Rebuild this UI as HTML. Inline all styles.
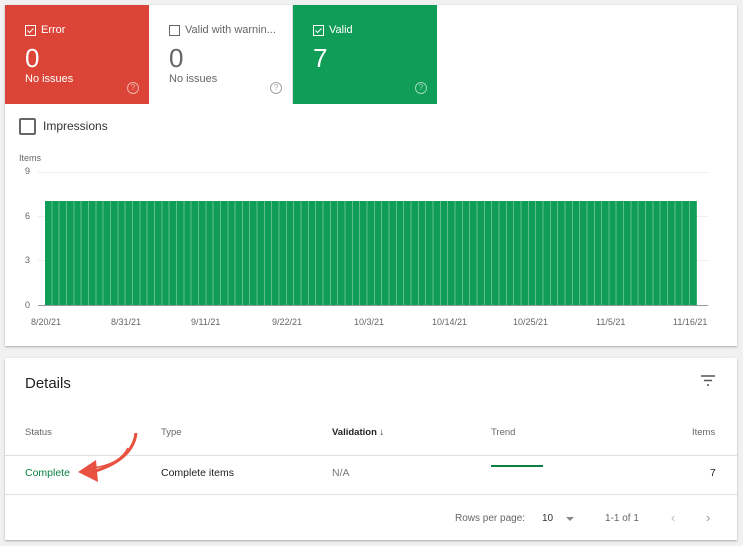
<!DOCTYPE html>
<html><head><style>
body{margin:0;background:#f1f1f1;width:743px;height:546px;position:relative;font-family:"Liberation Sans",Arial,sans-serif;overflow:hidden}
.card{position:absolute;left:5px;width:732px;background:#fff;box-shadow:0 1px 2px rgba(0,0,0,.3)}
.tile{position:absolute;top:0;width:144px;height:99px;}
.tile .lbl{position:absolute;left:20px;top:19px;font-size:11px;display:flex;align-items:center}
.cb{width:9px;height:9px;border:1px solid currentColor;margin-right:5px;position:relative}
.tile .num{position:absolute;left:20px;top:38px;font-size:26px}
.tile .sub{position:absolute;left:20px;top:68px;font-size:11px}
.q{position:absolute;right:10px;top:77px;width:10px;height:10px;border:1px solid currentColor;border-radius:50%;font-size:8px;text-align:center;line-height:10px;opacity:.6}
.ax{position:absolute;font-size:9px;color:#666}
.grid{position:absolute;left:38px;width:670px;height:1px;background:#eee}
.th{position:absolute;top:427px;font-size:9.5px;color:#666}
</style></head><body>
<div class="card" style="top:5px;height:341px">
 <div class="tile" style="left:0;background:#db4437;color:#fff"><div class="lbl"><div class="cb"><svg width="9" height="9" style="position:absolute;left:0;top:0"><path d="M1.5 4.5l2 2 4-4" stroke="#fff" fill="none" stroke-width="1"/></svg></div>Error</div><div class="num">0</div><div class="sub">No issues</div><div class="q">?</div></div>
 <div class="tile" style="left:144px;background:#fff;color:#666;border-right:1px solid #ddd;width:143px"><div class="lbl"><div class="cb"></div>Valid with warnin...</div><div class="num">0</div><div class="sub">No issues</div><div class="q">?</div></div>
 <div class="tile" style="left:288px;background:#0f9d58;color:#fff"><div class="lbl"><div class="cb"><svg width="9" height="9" style="position:absolute;left:0;top:0"><path d="M1.5 4.5l2 2 4-4" stroke="#fff" fill="none" stroke-width="1"/></svg></div>Valid</div><div class="num">7</div><div class="q">?</div></div>
 <div style="position:absolute;left:14px;top:113px;width:13px;height:13px;border:2px solid #666;border-radius:2px"></div>
 <div style="position:absolute;left:38px;top:114px;font-size:12px;color:#333">Impressions</div>
</div>
<div class="ax" style="left:19px;top:153px">Items</div>
<div class="ax" style="left:25px;top:166px">9</div>
<div class="ax" style="left:25px;top:211px">6</div>
<div class="ax" style="left:25px;top:255px">3</div>
<div class="ax" style="left:25px;top:300px">0</div>
<div class="grid" style="top:172px"></div>
<div class="grid" style="top:216px"></div>
<div class="grid" style="top:260px"></div>
<div style="position:absolute;left:45px;top:201px;width:652px;height:104px;background:repeating-linear-gradient(90deg,#0f9d58 0,#0f9d58 6.33px,#5fbf8c 6.33px,#5fbf8c 7.33px)"></div>
<div style="position:absolute;left:38px;top:305px;width:670px;height:1px;background:#999"></div>
<div class="ax" style="left:31px;top:317px">8/20/21</div>
<div class="ax" style="left:111px;top:317px">8/31/21</div>
<div class="ax" style="left:191px;top:317px">9/11/21</div>
<div class="ax" style="left:272px;top:317px">9/22/21</div>
<div class="ax" style="left:354px;top:317px">10/3/21</div>
<div class="ax" style="left:432px;top:317px">10/14/21</div>
<div class="ax" style="left:513px;top:317px">10/25/21</div>
<div class="ax" style="left:596px;top:317px">11/5/21</div>
<div class="ax" style="left:673px;top:317px">11/16/21</div>

<div class="card" style="top:358px;height:182px"></div>
<div style="position:absolute;left:25px;top:375px;font-size:15px;color:#222">Details</div>
<svg style="position:absolute;left:700px;top:375px" width="16" height="12"><path d="M1 1h14M4 5.5h8M7 10h2" stroke="#555" stroke-width="1.5"/></svg>
<div class="th" style="left:25px">Status</div>
<div class="th" style="left:161px">Type</div>
<div class="th" style="left:332px;color:#222;font-weight:bold">Validation <span style="font-weight:normal">&#8595;</span></div>
<div class="th" style="left:491px">Trend</div>
<div class="th" style="left:692px">Items</div>
<div style="position:absolute;left:5px;top:455px;width:732px;height:1px;background:#e0e0e0"></div>
<div style="position:absolute;left:25px;top:467px;font-size:10.5px;color:#0b8043">Complete</div>
<div style="position:absolute;left:161px;top:467px;font-size:10.5px;color:#222">Complete items</div>
<div style="position:absolute;left:332px;top:467px;font-size:10.5px;color:#777">N/A</div>
<div style="position:absolute;left:491px;top:465px;width:52px;height:2px;background:#0b8043"></div>
<div style="position:absolute;left:710px;top:467px;font-size:10.5px;color:#222">7</div>
<div style="position:absolute;left:5px;top:494px;width:732px;height:1px;background:#e0e0e0"></div>
<div style="position:absolute;left:455px;top:513px;font-size:10px;color:#666">Rows per page:</div>
<div style="position:absolute;left:542px;top:513px;font-size:10px;color:#333">10</div>
<div style="position:absolute;left:566px;top:517px;width:0;height:0;border-left:4px solid transparent;border-right:4px solid transparent;border-top:4px solid #888"></div>
<div style="position:absolute;left:605px;top:513px;font-size:10px;color:#666">1-1 of 1</div>
<div style="position:absolute;left:671px;top:510px;font-size:13px;color:#bbb">&#8249;</div>
<div style="position:absolute;left:706px;top:510px;font-size:13px;color:#999">&#8250;</div>
<svg style="position:absolute;left:72px;top:430px" width="70" height="60"><path d="M64 3C62 22 45 35 20 42" stroke="#e8503f" stroke-width="3" fill="none"/><path d="M56 18C50 30 38 36 20 38" stroke="#e8503f" stroke-width="1.5" fill="none"/><path d="M6 42L24 30L26 52Z" fill="#e8503f"/></svg>
</body></html>
